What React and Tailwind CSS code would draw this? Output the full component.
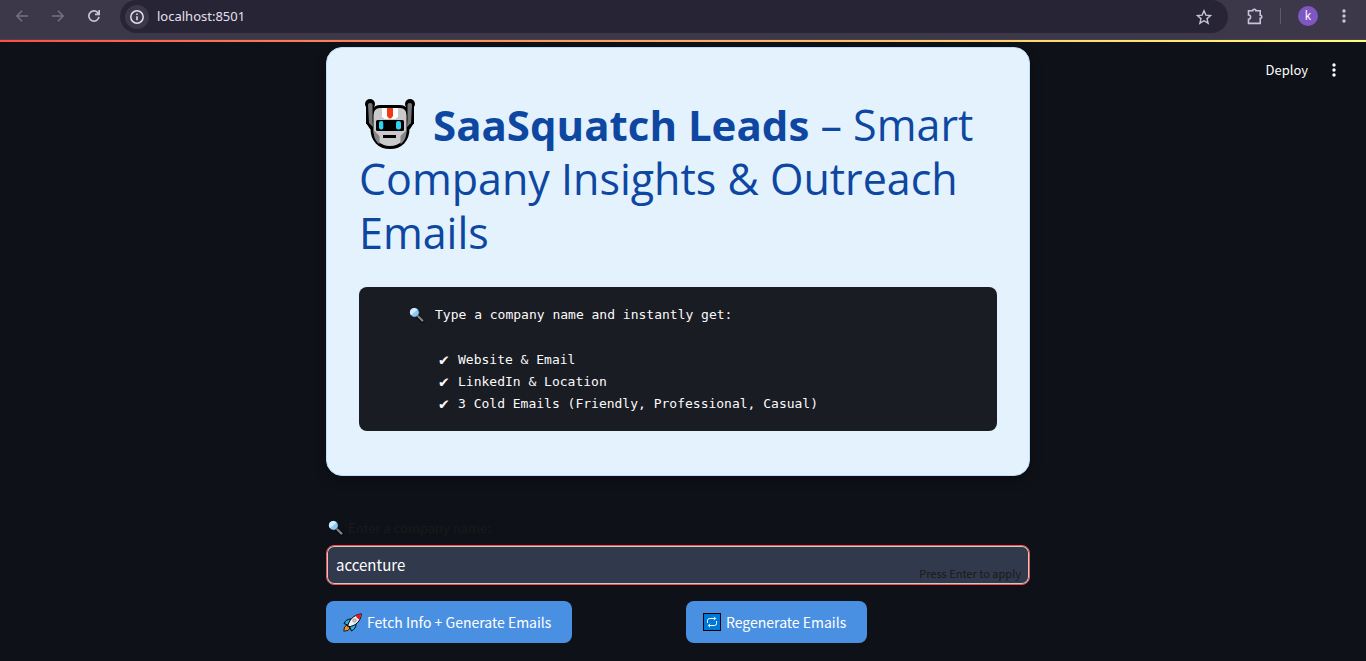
import React from "react";

function Robot() {
  return (
    <svg viewBox="0 0 50 50" className="mr-[18px] ml-[6px] inline-block size-[50px] align-[-8px]" aria-hidden="true">
      <circle cx="5" cy="5" r="5" fill="#000" />
      <circle cx="45" cy="5" r="5" fill="#000" />
      <path d="M1 5h8v20H4.500L1 25zM49 5h-8v20h4.500L49 25z" fill="#000" />
      <path d="M1 24l4 6h4V20zM49 24l-4 6h-4V20z" fill="#000" />
      <path d="M15 7.500h20c5 0 8 3.500 8 9V30c0 11-7 18.500-18 18.500S7 41 7 30V16.500c0-5.500 3-9 8-9z" fill="#cacaca" stroke="#000" strokeWidth="3" />
      <path d="M3 5.500a2.500 2.500 0 0 1 4.500 0V21L8 28l-4-4zM47 5.500a2.500 2.500 0 0 0-4.500 0V21L42 28l4-4z" fill="#767676" />
      <path d="M8.500 31l6 6v8.200C10.500 42.500 8.500 38 8.500 31zM41.500 31l-6 6v8.200C39.500 42.500 41.500 38 41.500 31z" fill="#858585" />
      <path d="M17 9h16v9l-3 2H20l-3-2z" fill="#fff" />
      <path d="M22 9h6v8l-2 2.500h-2L22 17z" fill="#f03a17" />
      <rect x="11" y="21" width="28" height="11" rx="1.500" fill="#000" />
      <rect x="14" y="22" width="4.300" height="8.500" rx="2" fill="#31d2f7" />
      <rect x="31" y="22" width="5" height="8.500" rx="2" fill="#31d2f7" />
      <rect x="18" y="36" width="13" height="3" fill="#000" />
    </svg>
  );
}

function Magnifier() {
  return (
    <svg viewBox="0 0 16 16" className="size-4 shrink-0" aria-hidden="true">
      <path d="M9 9.500l4.500 4.300" stroke="#000" strokeWidth="3.600" strokeLinecap="round" />
      <path d="M8.800 9l4.700 4.600" stroke="#7f8486" strokeWidth="2.200" strokeLinecap="round" />
      <circle cx="5.500" cy="5.500" r="4.700" fill="#8ec8f5" stroke="#000" strokeWidth=".5" />
      <path d="M2 8.200a4.300 4.300 0 0 1 6.500-5.800z" fill="#d3ebfc" />
    </svg>
  );
}

function Rocket() {
  return (
    <svg viewBox="0 0 19 19" className="size-[19px] shrink-0" aria-hidden="true">
      <path d="M1 10.500C2.500 7.500 4.500 6 8 6l5 5c.200 3-1.500 5.500-4.500 7L6.800 14 4.500 12z" fill="#1bb5ef" stroke="#000" strokeWidth="1" />
      <path d="M.8 18.200L1.500 14 4 12l3 3-2 2.500z" fill="#f7941d" stroke="#000" strokeWidth=".8" />
      <path d="M4.800 13.800C5.500 7 10.500 2 18.300.8 18 8 12.500 13.500 4.800 13.800z" fill="#f2f2f2" stroke="#000" strokeWidth="1" />
      <path d="M12.500 2.500L18.300.8 16.500 6.500C15 6 13.300 4.200 12.500 2.500z" fill="#e81224" />
      <circle cx="11.500" cy="7.500" r="1.800" fill="#c7c7c7" stroke="#8a8a8a" strokeWidth=".6" />
    </svg>
  );
}

function Repeat() {
  return (
    <svg viewBox="0 0 18 18" className="size-[18px] shrink-0" aria-hidden="true">
      <rect x=".5" y=".5" width="17" height="17" fill="#0078d7" stroke="#000" />
      <path d="M4.500 10V7.500Q4.500 5.500 6.500 5.500h6M11 3.800l1.700 1.700L11 7.200M13.500 8v2.500q0 2-2 2h-6M7 10.800l-1.700 1.700L7 14.200" fill="none" stroke="#fff" strokeWidth="1" />
    </svg>
  );
}

function Dots({ className }) {
  return (
    <svg viewBox="0 0 4 16" className={className} fill="currentColor" aria-hidden="true">
      <circle cx="2" cy="3" r="1.700" />
      <circle cx="2" cy="8" r="1.700" />
      <circle cx="2" cy="13" r="1.700" />
    </svg>
  );
}

function BrowserBar() {
  return (
    <div className="flex h-10 items-start border-b border-[#464349] bg-[#3c384a] text-[#c9c3d9]">
      <div className="flex h-8 w-[120px] items-center gap-6 pl-4">
        <button aria-label="Back" className="text-[#76717f]">
          <svg viewBox="0 0 12 12" className="size-3" fill="none" stroke="currentColor" strokeWidth="1.500"><path d="M12 6H1M6 .8L.8 6 6 11.200" /></svg>
        </button>
        <button aria-label="Forward" className="text-[#76717f]">
          <svg viewBox="0 0 12 12" className="size-3" fill="none" stroke="currentColor" strokeWidth="1.500"><path d="M0 6h11M6 .8L11.200 6 6 11.200" /></svg>
        </button>
        <button aria-label="Reload">
          <svg viewBox="0 0 12 12" className="size-3" fill="none" stroke="currentColor" strokeWidth="1.700"><path d="M11 6.800A5.100 5.100 0 1 1 9.800 2.600L11 4M11.200 0v4.300H7" /></svg>
        </button>
      </div>
      <div className="flex h-[33px] flex-1 items-center rounded-full bg-[#272435] pr-4 pl-[5px]">
        <button aria-label="Site information" className="flex size-6 items-center justify-center rounded-full bg-[#3c384a] text-[#e6e0ee]">
          <svg viewBox="0 0 14 14" className="size-[14px]" fill="none" stroke="currentColor" strokeWidth="1.500"><circle cx="7" cy="7" r="6.200" /><path d="M7 6.300v4M7 3.500v1.500" /></svg>
        </button>
        <input aria-label="Address" defaultValue="localhost:8501" className="ml-2 min-w-0 flex-1 bg-transparent font-['Noto_Sans','Open_Sans',sans-serif] text-[13px] text-[#e6e0ee] outline-none" />
        <button aria-label="Bookmark">
          <svg viewBox="0 0 16 16" className="size-4" fill="none" stroke="currentColor" strokeWidth="1.400"><path d="M8 1.800l1.900 4.300 4.700.4-3.600 3.100 1.100 4.600L8 11.700l-4.100 2.500L5 9.600 1.400 6.500l4.700-.4z" /></svg>
        </button>
      </div>
      <div className="flex h-8 items-center pl-[19px]">
        <button aria-label="Extensions">
          <svg viewBox="0 0 17 17" className="size-[17px]" fill="none" stroke="currentColor" strokeWidth="1.600"><path d="M1.500 2.800h4.200a1.600 1.600 0 0 1 3.200 0h4.300v4.400a1.600 1.600 0 0 1 0 3.200v5H1.500v-4.200a2 2 0 0 0 0-4.200z" /></svg>
        </button>
        <span className="ml-4 h-4 w-px bg-[#5d596b]" />
        <button aria-label="Profile" className="ml-[17px] flex size-5 items-center justify-center rounded-full bg-[#7e57c2] font-['Noto_Sans',sans-serif] text-[12px] text-white">k</button>
        <button aria-label="Browser menu" className="mr-5 ml-6"><Dots className="h-4 w-1" /></button>
      </div>
    </div>
  );
}

function Check({ children }) {
  return (
    <span className="flex gap-2 pl-16">
      <span className="w-[11px] text-[16px]">✔</span>
      <span>{children}</span>
    </span>
  );
}

export default function App() {
  return (
    <div className="min-h-screen bg-[#0e1117] font-['Noto_Sans_CJK_JP','Open_Sans',sans-serif] text-white">
      <BrowserBar />
      <div className="h-[2px] bg-linear-to-r from-[#ff4b4b] to-[#fffd80]" />
      <div className="grid grid-cols-[1fr_minmax(0,704px)_1fr] pt-[5px] pr-[10px]">
        <main className="col-start-2">
          <section className="rounded-2xl border border-[#bbdefb] bg-[#e3f2fd] px-8 pt-[50px] pb-11 shadow-[0_4px_12px_rgba(0,0,0,0.3)]">
            <h1 className="font-['Open_Sans','Noto_Sans',sans-serif] text-[43px] leading-[54px] text-[#0d47a1]">
              <Robot />
              <strong className="text-[42px] font-bold">SaaSquatch Leads</strong>{" "}
              <span>– Smart</span>{" "}
              <span>Company Insights &amp; Outreach</span>{" "}
              <span>Emails</span>
            </h1>
            <pre className="mt-[27px] rounded-lg bg-[#1a1c24] px-4 pt-[17px] pb-4 font-['DejaVu_Sans_Mono',monospace] text-[13px] leading-[22px] text-[#fafafa]">
              <code className="font-['DejaVu_Sans_Mono',monospace]">
                <span className="flex items-center gap-[10px] pl-[34px]"><Magnifier />Type a company name and instantly get:</span>
                <span className="block h-[23px]" />
                <Check>Website &amp; Email</Check>
                <Check>LinkedIn &amp; Location</Check>
                <Check>3 Cold Emails (Friendly, Professional, Casual)</Check>
              </code>
            </pre>
          </section>
          <label htmlFor="company" className="mt-[42px] flex h-5 items-center gap-1 pl-[2px] text-[13px] leading-5 text-[#1a1a1a]">
            <Magnifier />
            Enter a company name:
          </label>
          <div className="mt-[7px] flex h-10 items-end rounded-lg border border-[#ff4b4b] bg-[#31394c] shadow-[inset_0_0_0_1px_#cccccc]">
            <input id="company" defaultValue="accenture" className="h-full min-w-0 flex-1 bg-transparent pb-[2px] pl-[9px] text-[15px] text-white outline-none" />
            <span className="pr-2 text-[11px] leading-[22px] text-[#1a1a1a]">Press Enter to apply</span>
          </div>
          <div className="mt-4 grid grid-cols-2 gap-4">
            <div>
              <button className="flex h-[42px] items-center gap-[5px] rounded-lg bg-[#4a90e2] pr-[21px] pl-[17px] text-[14px]"><Rocket />Fetch Info + Generate Emails</button>
            </div>
            <div>
              <button className="flex h-[42px] items-center gap-[5px] rounded-lg bg-[#4a90e2] pr-[21px] pl-[17px] text-[14px]"><Repeat />Regenerate Emails</button>
            </div>
          </div>
        </main>
        <div className="flex items-center gap-6 justify-self-end self-start pt-[13px] pr-5 text-[13px] leading-[20px]">
          <button>Deploy</button>
          <button aria-label="Main menu"><Dots className="h-4 w-1" /></button>
        </div>
      </div>
    </div>
  );
}
